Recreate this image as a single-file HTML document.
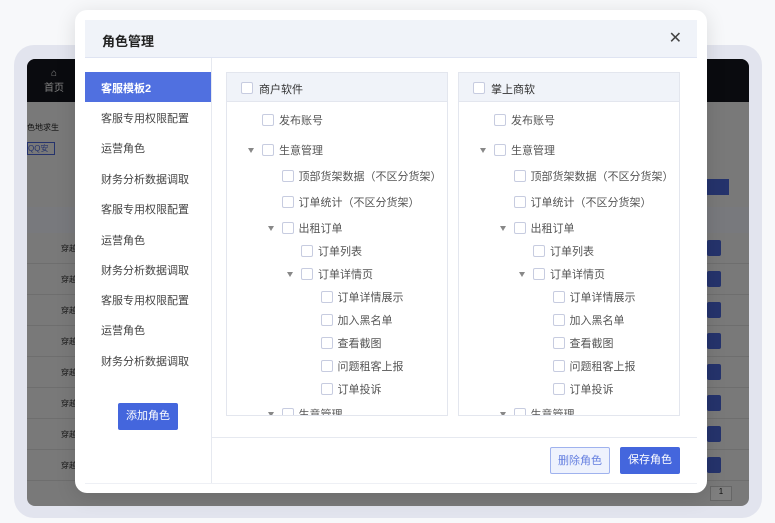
<!DOCTYPE html>
<html><head><meta charset="utf-8"><style>
*{box-sizing:border-box;margin:0;padding:0}
body{width:775px;height:523px;background:#f7f8fa;position:relative;overflow:hidden;font-family:"Liberation Sans","Noto Sans CJK SC",sans-serif;}
.frame{position:absolute;left:14px;top:45px;width:748px;height:473px;background:#e2e4ee;border-radius:20px}
.inner{position:absolute;left:27px;top:59px;width:722px;height:447px;background:#f2f2f2;border-radius:8px;overflow:hidden}
.topbar{position:absolute;left:0;top:0;width:100%;height:43px;background:#15171f}
.abs{position:absolute}
.modal{position:absolute;left:75px;top:10px;width:632px;height:483px;background:#fff;border-radius:12px;box-shadow:0 4px 20px rgba(0,0,0,.12)}
.hdr{position:absolute;left:10px;top:10px;width:612px;height:38px;background:#f0f3f9;border-bottom:1px solid #dfe4f2;font-size:13px;font-weight:bold;color:#222;padding:11px 0 0 17px}
.side{position:absolute;left:10px;top:48px;width:127px;height:425px;border-right:1px solid #e6e9f0}
.item{position:absolute;left:0;width:126px;height:30px;font-size:11px;color:#444;padding:8px 0 0 16px}
.item.act{background:#5070e0;color:#fff;font-weight:bold}
.btn{position:absolute;font-size:11px;text-align:center;line-height:27px;border-radius:2px}
.panel{position:absolute;top:72px;width:222px;height:344px;border:1px solid #e3e6ee;overflow:hidden}
.ph{height:29px;background:#f0f3f9;border-bottom:1px solid #e3e6ee;font-size:11px;color:#333;padding:8px 0 0 32px;position:relative}
.cb{position:absolute;width:12px;height:12px;border:1px solid #c7cce0;border-radius:2px;background:#fff}
.t{position:absolute;font-size:11px;color:#555;white-space:nowrap}
.ar{position:absolute;width:0;height:0;border-left:3.5px solid transparent;border-right:3.5px solid transparent;border-top:5px solid #888}
.row{position:absolute;left:0;width:722px;height:31px;border-bottom:1px solid #ddd;font-size:8px;color:#333;padding:10px 0 0 34px}
.bb{position:absolute;left:680px;top:7px;width:14px;height:16px;background:#4a66d8;border-radius:2px}
.dim{position:absolute;left:0;top:0;width:100%;height:100%;background:rgba(0,0,0,0.5)}
</style></head><body>
<div class="frame"></div>
<div class="inner">
 <div class="topbar"></div>
 <div class="abs" style="left:17px;top:9px;color:#fff;font-size:10px;text-align:center">⌂<br>首页</div>
 <div class="abs" style="left:0;top:148px;width:722px;height:26px;background:#f0f3fb"></div>
 <div class="abs" style="left:680px;top:120px;width:22px;height:16px;background:#4a66d8"></div>
 <div class="abs" style="left:0;top:63px;font-size:8px;color:#222">色地求生</div>
 <div class="abs" style="left:0;top:83px;width:28px;height:13px;border:1px solid #4a66d8;font-size:8px;color:#4a66d8;overflow:hidden">QQ安卓</div>
 <div class="row" style="top:174px">穿越<span class="bb"></span></div>
 <div class="row" style="top:205px">穿越<span class="bb"></span></div>
 <div class="row" style="top:236px">穿越<span class="bb"></span></div>
 <div class="row" style="top:267px">穿越<span class="bb"></span></div>
 <div class="row" style="top:298px">穿越<span class="bb"></span></div>
 <div class="row" style="top:329px">穿越<span class="bb"></span></div>
 <div class="row" style="top:360px">穿越<span class="bb"></span></div>
 <div class="row" style="top:391px">穿越<span class="bb"></span></div>
 <div class="abs" style="left:683px;top:427px;width:22px;height:15px;background:#fff;border:1px solid #ccc;font-size:8px;text-align:center;color:#222">1</div>
 <div class="dim"></div>
</div>
<div class="modal">
 <div class="hdr">角色管理<span style="position:absolute;right:15px;top:9px;font-size:16px;font-weight:normal;color:#444;line-height:20px">✕</span></div>
 <div class="side">
  <div class="item act" style="top:14px">客服模板2</div>
  <div class="item" style="top:44px">客服专用权限配置</div>
  <div class="item" style="top:74px">运营角色</div>
  <div class="item" style="top:105px">财务分析数据调取</div>
  <div class="item" style="top:135px">客服专用权限配置</div>
  <div class="item" style="top:166px">运营角色</div>
  <div class="item" style="top:196px">财务分析数据调取</div>
  <div class="item" style="top:226px">客服专用权限配置</div>
  <div class="item" style="top:256px">运营角色</div>
  <div class="item" style="top:287px">财务分析数据调取</div>
  <div class="btn" style="left:33px;top:345px;width:60px;height:27px;background:#4466dd;color:#fff">添加角色</div>
 </div>
 <div class="abs" style="left:137px;top:427px;width:485px;height:1px;background:#e6e9f0"></div>
 <div class="abs" style="left:10px;top:473px;width:612px;height:1px;background:#eef0f5"></div>
 <div class="btn" style="left:475px;top:437px;width:60px;height:27px;background:#eef2fd;border:1px solid #9fb2ee;color:#6680e0">删除角色</div>
 <div class="btn" style="left:545px;top:437px;width:60px;height:27px;background:#4466dd;color:#fff">保存角色</div>
</div>
<div id="p1" class="panel" style="left:226px"></div>
<div id="p2" class="panel" style="left:458px"></div>
<script>
var rows=[[0,'发布账号',120,0],[0,'生意管理',150,1],[1,'顶部货架数据（不区分货架）',176,0],[1,'订单统计（不区分货架）',202,0],[1,'出租订单',228,1],[2,'订单列表',251,0],[2,'订单详情页',274,1],[3,'订单详情展示',297,0],[3,'加入黑名单',320,0],[3,'查看截图',343,0],[3,'问题租客上报',366,0],[3,'订单投诉',389,0],[1,'生意管理',414,1]];
var names=['商户软件','掌上商软'];
['p1','p2'].forEach(function(id,k){
 var p=document.getElementById(id);var h='<div class="ph"><span class="cb" style="left:14px;top:9px"></span>'+names[k]+'</div>';
 rows.forEach(function(r){var x=35+r[0]*19.5,y=r[2]-72-7;
  h+='<span class="cb" style="left:'+x+'px;top:'+y+'px"></span><span class="t" style="left:'+(x+17)+'px;top:'+(y-2)+'px">'+r[1]+'</span>';
  if(r[3])h+='<span class="ar" style="left:'+(x-14)+'px;top:'+(y+4)+'px"></span>';});
 p.innerHTML=h;});
</script>
</body></html>
